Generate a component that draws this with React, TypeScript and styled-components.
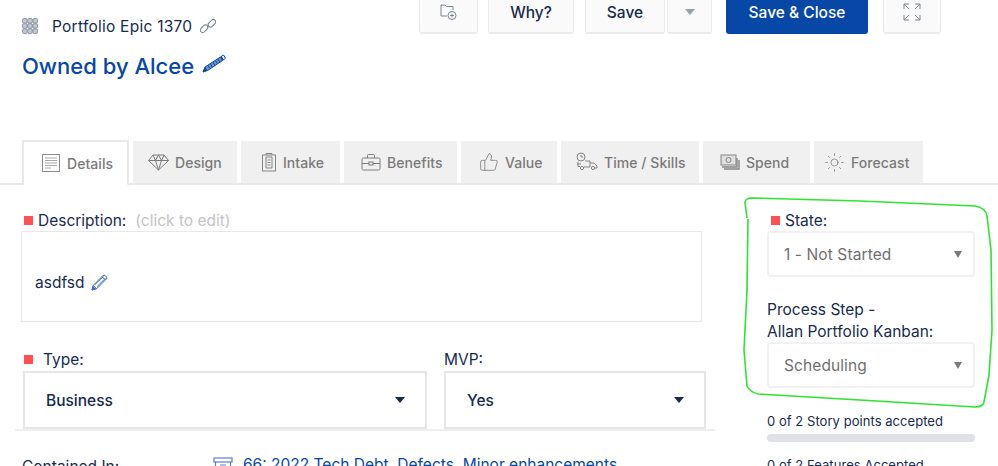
import * as React from "react"
import styled, { createGlobalStyle } from "styled-components"
import { Sun, ThumbsUp } from "lucide-react"

const GlobalStyle = createGlobalStyle`
  html, body {
    margin: 0;
    padding: 0;
    background: #fff;
  }
  body {
    font-family: Inter, "Liberation Sans", sans-serif;
    color: #172b4d;
  }
`

const Page = styled.div`
  position: relative;
  width: 998px;
  height: 466px;
  overflow: hidden;
`

const Header = styled.div`
  display: flex;
  justify-content: space-between;
  height: 140px;
`

const TitleBlock = styled.div`
  padding: 15px 0 0 22px;
`

const EpicRow = styled.div`
  display: flex;
  align-items: center;
  height: 22px;
  font-size: 15.5px;
  color: #172b4d;
`

const EpicName = styled.span`
  margin-left: 14px;
  margin-right: 8px;
  letter-spacing: 0.25px;
`

const TitleRow = styled.div`
  display: flex;
  align-items: center;
  gap: 8px;
  margin-top: 11px;
  height: 36px;
  font-size: 22px;
  font-weight: 500;
  color: #0747a6;
`

const PencilLift = styled.span`
  display: flex;
  margin-bottom: 5px;
`

const Toolbar = styled.div`
  display: flex;
  align-items: flex-start;
  padding-right: 57px;
`

const ToolButton = styled.div<{ $w: number; $gap: number; $primary?: boolean }>`
  display: flex;
  align-items: center;
  justify-content: center;
  box-sizing: border-box;
  width: ${(p) => p.$w}px;
  height: 34px;
  margin-left: ${(p) => p.$gap}px;
  padding-bottom: 8px;
  border-radius: 0 0 3px 3px;
  border: 1px solid ${(p) => (p.$primary ? "#0747a6" : "#ebebec")};
  border-top: none;
  border-bottom-width: 2px;
  background: ${(p) => (p.$primary ? "#0747a6" : "#fafafb")};
  color: ${(p) => (p.$primary ? "#fff" : "#172b4d")};
  font-size: 15.5px;
  font-weight: 500;
`

const ButtonCaret = styled.span`
  width: 0;
  height: 0;
  border-left: 5px solid transparent;
  border-right: 5px solid transparent;
  border-top: 6px solid #97a0af;
`

const TabBar = styled.div`
  display: flex;
  align-items: flex-start;
  height: 45px;
  padding-left: 22px;
  box-sizing: border-box;
  border-bottom: 2px solid #e8e8e8;
`

const Tab = styled.div<{ $w: number; $pad: number; $active?: boolean }>`
  display: flex;
  align-items: center;
  gap: 6px;
  box-sizing: border-box;
  width: ${(p) => p.$w}px;
  height: ${(p) => (p.$active ? 46 : 42)}px;
  margin-top: ${(p) => (p.$active ? 0 : 1)}px;
  margin-right: 4px;
  padding-left: ${(p) => p.$pad}px;
  background: ${(p) => (p.$active ? "#fff" : "#f0f0f0")};
  border: ${(p) => (p.$active ? "2px solid #e8e8e8" : "none")};
  border-bottom: ${(p) => (p.$active ? "2px solid #fff" : "none")};
  color: #7a7a7a;
  font-size: 14px;
  font-weight: 500;
  letter-spacing: 0.05px;
`

const Content = styled.div`
  display: flex;
`

const LeftColumn = styled.div`
  width: 767px;
  padding: 26px 0 0 22px;
  box-sizing: border-box;
`

const RightColumn = styled.div`
  width: 208px;
  padding-top: 26px;
`

const FieldLabel = styled.div`
  display: flex;
  align-items: center;
  height: 19px;
  font-size: 15.5px;
  color: #172b4d;
`

const RequiredMark = styled.span<{ $gap?: number; $left?: number }>`
  width: 9px;
  height: 9px;
  margin-left: ${(p) => p.$left ?? 2}px;
  margin-right: ${(p) => p.$gap ?? 5}px;
  background: #ff5054;
`

const Hint = styled.span`
  margin-left: 9px;
  color: #c4c4c4;
  font-size: 15.5px;
`

const DescriptionBox = styled.div`
  display: flex;
  align-items: center;
  gap: 7px;
  box-sizing: border-box;
  width: 681px;
  height: 91px;
  margin: 1px 0 0 -1px;
  padding: 12px 0 0 13px;
  border: 1px solid #e8e8e8;
  font-size: 15.5px;
`

const SelectRow = styled.div`
  display: flex;
  gap: 17px;
  margin-top: 28px;
  margin-left: 1px;
`

const SelectField = styled.div<{ $w: number }>`
  width: ${(p) => p.$w}px;
`

const HeavySelect = styled.div`
  display: flex;
  align-items: center;
  justify-content: space-between;
  box-sizing: border-box;
  height: 58px;
  margin-top: 2px;
  padding: 0 20px 0 21px;
  border: 2px solid #e6e6e6;
  font-size: 15.5px;
  font-weight: 500;
`

const DarkCaret = styled.span`
  width: 0;
  height: 0;
  border-left: 5px solid transparent;
  border-right: 5px solid transparent;
  border-top: 6px solid #172b4d;
`

const Rule = styled.div`
  width: 700px;
  height: 2px;
  margin-left: -7px;
  background: #eeeeee;
`

const ContainedRow = styled.div`
  display: flex;
  align-items: center;
  margin-top: 22px;
  font-size: 15.5px;
  height: 22px;
`

const ContainedLabel = styled.span`
  width: 191px;
  padding-top: 4px;
`

const ContainedLink = styled.span`
  margin-left: 10px;
  color: #0747a6;
`

const LightSelect = styled.div<{ $top: number }>`
  display: flex;
  align-items: center;
  justify-content: space-between;
  box-sizing: border-box;
  height: 46px;
  margin-top: ${(p) => p.$top}px;
  padding: 0 11px 0 15px;
  border: 2px solid #f1f1f2;
  border-radius: 4px;
  color: #6f6f6f;
  font-size: 15.5px;
  letter-spacing: 0.1px;
`

const GreyCaret = styled.span`
  width: 0;
  height: 0;
  border-left: 4px solid transparent;
  border-right: 4px solid transparent;
  border-top: 7px solid #7a7a7a;
`

const ProcessLabel = styled.div`
  margin-top: 22px;
  font-size: 15.5px;
  line-height: 22px;
`

const Metric = styled.div`
  margin-top: 25px;
  font-size: 13px;
  line-height: 16px;
  letter-spacing: 0.05px;
`

const ProgressTrack = styled.div`
  height: 8px;
  margin-top: 5px;
  border-radius: 4px;
  background: #dfe1e6;
`

const MetricNext = styled.div`
  margin-top: 15px;
  font-size: 13px;
  line-height: 16px;
  letter-spacing: 0.05px;
`

const Scribble = styled.svg`
  position: absolute;
  left: 0;
  top: 0;
  pointer-events: none;
`

const GridIcon = () => (
  <svg width="16" height="16" viewBox="0 0 16 16" fill="#c2c7d1" stroke="#7f8899" strokeWidth="0.8">
    {[0.5, 5.7, 10.9].map((y) =>
      [0.5, 5.7, 10.9].map((x) => (
        <rect key={`${x}-${y}`} x={x} y={y} width="4.6" height="4.6" rx="1.2" />
      ))
    )}
  </svg>
)

const ChainIcon = () => (
  <svg width="16" height="16" viewBox="0 0 16 16" fill="none" stroke="#6f7a8d" strokeWidth="1">
    <rect x="-0.2" y="8.4" width="8.6" height="4.8" rx="2.4" transform="rotate(-45 4 10.8)" />
    <rect x="7.6" y="2.8" width="8.6" height="4.8" rx="2.4" transform="rotate(-45 12 5.2)" />
  </svg>
)

// hatched pencil next to the title
const TitlePencil = () => (
  <svg width="24" height="19" viewBox="0 0 24 19" fill="none">
    <path d="M1 18l2-5L18.5 3l2 3.5L5.500 16.5z" fill="#6f93cf" stroke="#0747a6" strokeWidth="1" />
    <path d="M1 18l2-5 2.5 3.5z" fill="#0747a6" />
    <path d="M6 11.5l2 3.2M8.5 10l2 3.2M11 8.2l2 3.2M13.5 6.5l2 3.2M16 5l2 3.2" stroke="#0747a6" strokeWidth="1" />
    <path d="M18.5 3l3-2 2 3.2-3 2.3z" fill="#fff" stroke="#0747a6" strokeWidth="1" />
    <path d="M18.5 3l1.2-.8 2 3.2-1.2 1.1z" fill="#0747a6" />
  </svg>
)

const EditPencil = () => (
  <svg width="17" height="17" viewBox="0 0 17 17" fill="none" stroke="#3d6cc4" strokeWidth="1">
    <path d="M1 16l1.2-4.6L12 1.6a1.6 1.6 0 0 1 2.2 0l1.2 1.2a1.6 1.6 0 0 1 0 2.2L5.6 14.8z" />
    <path d="M2.2 11.4l3.4 3.4M11 2.6l3.4 3.4M4 10.6l8.6-8.4M6 12.6l8.6-8.4" />
    <path d="M1 16l1-3.4 2.4 2.4z" fill="#3d6cc4" />
  </svg>
)

const FolderPlusIcon = () => (
  <svg width="17" height="18" viewBox="0 0 17 18" fill="none" stroke="#7b8494" strokeWidth="1">
    <path d="M1 13V2h4l1.5 1.5H13V7" />
    <path d="M1 13h6" />
    <circle cx="12" cy="12.5" r="4" />
    <path d="M12 10.5v4M10 12.5h4" />
  </svg>
)

const ExpandIcon = () => (
  <svg width="18" height="18" viewBox="0 0 18 18" fill="none" stroke="#7b8494" strokeWidth="1">
    <path d="M1 6V1h5M1 1l5 5M12 1h5v5M17 1l-5 5M1 12v5h5M1 17l5-5M17 12v5h-5M17 17l-5-5" />
  </svg>
)

const DocIcon = () => (
  <svg width="20" height="20" viewBox="0 0 20 20" fill="none" stroke="#8c8c8c" strokeWidth="1">
    <rect x="1.5" y="1.5" width="17" height="17" />
    <path d="M4 5h12M4 7.5h12M4 10h12M4 12.5h12M4 15h6" stroke="#a8a8a8" />
  </svg>
)

const DiamondIcon = () => (
  <svg width="21" height="17" viewBox="0 0 21 17" fill="none" stroke="#7d7d7d" strokeWidth="1">
    <path d="M5 1h11l4.5 5.5L10.5 16 .5 6.5z" />
    <path d="M.5 6.5h20M5 1l2.5 5.5 3 9.5 3-9.5L16 1M7.5 6.5L10.5 1l3 5.500" />
  </svg>
)

const ClipboardIcon = () => (
  <svg width="16" height="20" viewBox="0 0 16 20" fill="none" stroke="#858585" strokeWidth="1">
    <rect x="1.5" y="3" width="13" height="16" />
    <path d="M5 3V1.5h6V3M5 5h6v11H5zM6.5 8h3M6.5 10.5h3M6.5 13h3" />
  </svg>
)

const BriefcaseIcon = () => (
  <svg width="20" height="18" viewBox="0 0 20 18" fill="none" stroke="#7d7d7d" strokeWidth="1">
    <rect x="1" y="5" width="18" height="12" rx="1.5" />
    <path d="M6.5 5V2.500a1 1 0 0 1 1-1h5a1 1 0 0 1 1 1V5M1 10.500h7M12 10.500h7" />
    <rect x="8" y="9" width="4" height="3" />
  </svg>
)

const TruckIcon = () => (
  <svg width="22" height="20" viewBox="0 0 22 20" fill="none" stroke="#858585" strokeWidth="1">
    <circle cx="5" cy="5" r="4" />
    <path d="M5 3v2h2M2 9.5v5h2M9 9h5v6H8M14 11h4l3 3v2h-2M1 12h4" />
    <circle cx="6" cy="16" r="1.6" />
    <circle cx="17" cy="16" r="1.6" />
  </svg>
)

const MoneyIcon = () => (
  <svg width="20" height="18" viewBox="0 0 20 18" fill="none" stroke="#858585" strokeWidth="1">
    <rect x="1" y="2" width="15" height="10" fill="#e0e0e0" />
    <circle cx="8.5" cy="7" r="2.5" />
    <path d="M2 14h15V5M4 16h15V7" strokeWidth="1.4" />
  </svg>
)

const BoardIcon = () => (
  <svg width="20" height="16" viewBox="0 0 20 16" fill="none" stroke="#5f7fc0" strokeWidth="1.2">
    <rect x="1" y="2" width="18" height="4" />
    <path d="M2.5 6v9h15V6M7 9h6" />
  </svg>
)

const tabs: { label: string; w: number; pad: number; icon: React.ReactNode }[] = [
  { label: "Design", w: 104, pad: 15, icon: <DiamondIcon /> },
  { label: "Intake", w: 99, pad: 20, icon: <ClipboardIcon /> },
  { label: "Benefits", w: 113, pad: 17, icon: <BriefcaseIcon /> },
  { label: "Value", w: 96, pad: 18, icon: <ThumbsUp size={20} strokeWidth={1} color="#7d7d7d" /> },
  { label: "Time / Skills", w: 138, pad: 15, icon: <TruckIcon /> },
  { label: "Spend", w: 107, pad: 17, icon: <MoneyIcon /> },
  { label: "Forecast", w: 109, pad: 10, icon: <Sun size={21} strokeWidth={0.9} color="#7d7d7d" /> },
]

export default function App() {
  return (
    <Page>
      <GlobalStyle />
      <Header>
        <TitleBlock>
          <EpicRow>
            <GridIcon />
            <EpicName>Portfolio Epic 1370</EpicName>
            <ChainIcon />
          </EpicRow>
          <TitleRow>
            Owned by Alcee
            <PencilLift>
              <TitlePencil />
            </PencilLift>
          </TitleRow>
        </TitleBlock>
        <Toolbar>
          <ToolButton $w={59} $gap={0}><FolderPlusIcon /></ToolButton>
          <ToolButton $w={86} $gap={10}>Why?</ToolButton>
          <ToolButton $w={80} $gap={11}>Save</ToolButton>
          <ToolButton $w={45} $gap={2}><ButtonCaret /></ToolButton>
          <ToolButton $w={142} $gap={14} $primary>Save &amp; Close</ToolButton>
          <ToolButton $w={58} $gap={15}><ExpandIcon /></ToolButton>
        </Toolbar>
      </Header>
      <TabBar>
        <Tab $w={107} $pad={17} $active><DocIcon />Details</Tab>
        {tabs.map((t) => (
          <Tab key={t.label} $w={t.w} $pad={t.pad}>
            {t.icon}
            {t.label}
          </Tab>
        ))}
      </TabBar>
      <Content>
        <LeftColumn>
          <FieldLabel>
            <RequiredMark />
            Description:
            <Hint>(click to edit)</Hint>
          </FieldLabel>
          <DescriptionBox>
            asdfsd
            <EditPencil />
          </DescriptionBox>
          <SelectRow>
            <SelectField $w={404}>
              <FieldLabel>
                <RequiredMark $left={1} $gap={10} />
                Type:
              </FieldLabel>
              <HeavySelect>Business<DarkCaret /></HeavySelect>
            </SelectField>
            <SelectField $w={262}>
              <FieldLabel>MVP:</FieldLabel>
              <HeavySelect>Yes<DarkCaret /></HeavySelect>
            </SelectField>
          </SelectRow>
          <Rule />
          <ContainedRow>
            <ContainedLabel>Contained In:</ContainedLabel>
            <BoardIcon />
            <ContainedLink>66: 2022 Tech Debt, Defects, Minor enhancements</ContainedLink>
          </ContainedRow>
        </LeftColumn>
        <RightColumn>
          <FieldLabel>
            <RequiredMark $left={4} />
            State:
          </FieldLabel>
          <LightSelect $top={1}>1 - Not Started<GreyCaret /></LightSelect>
          <ProcessLabel>
            Process Step -
            <br />
            Allan Portfolio Kanban:
          </ProcessLabel>
          <LightSelect $top={-1}>Scheduling<GreyCaret /></LightSelect>
          <Metric>0 of 2 Story points accepted</Metric>
          <ProgressTrack />
          <MetricNext>0 of 2 Features Accepted</MetricNext>
        </RightColumn>
      </Content>
      <Scribble width="998" height="466" viewBox="0 0 998 466" fill="none">
        <path
          d="M747 218 L745 203 Q745 198 752 198 L860 201 L975 206 Q986 208 987 216 L991 250 L992 330 L989 375 L984 402 Q983 407 975 407 L860 400 L758 394 Q750 392 747 386 L744 350 L747 290 L748 219"
          stroke="#2fe32f"
          strokeWidth="1.6"
          strokeLinejoin="round"
        />
      </Scribble>
    </Page>
  )
}
